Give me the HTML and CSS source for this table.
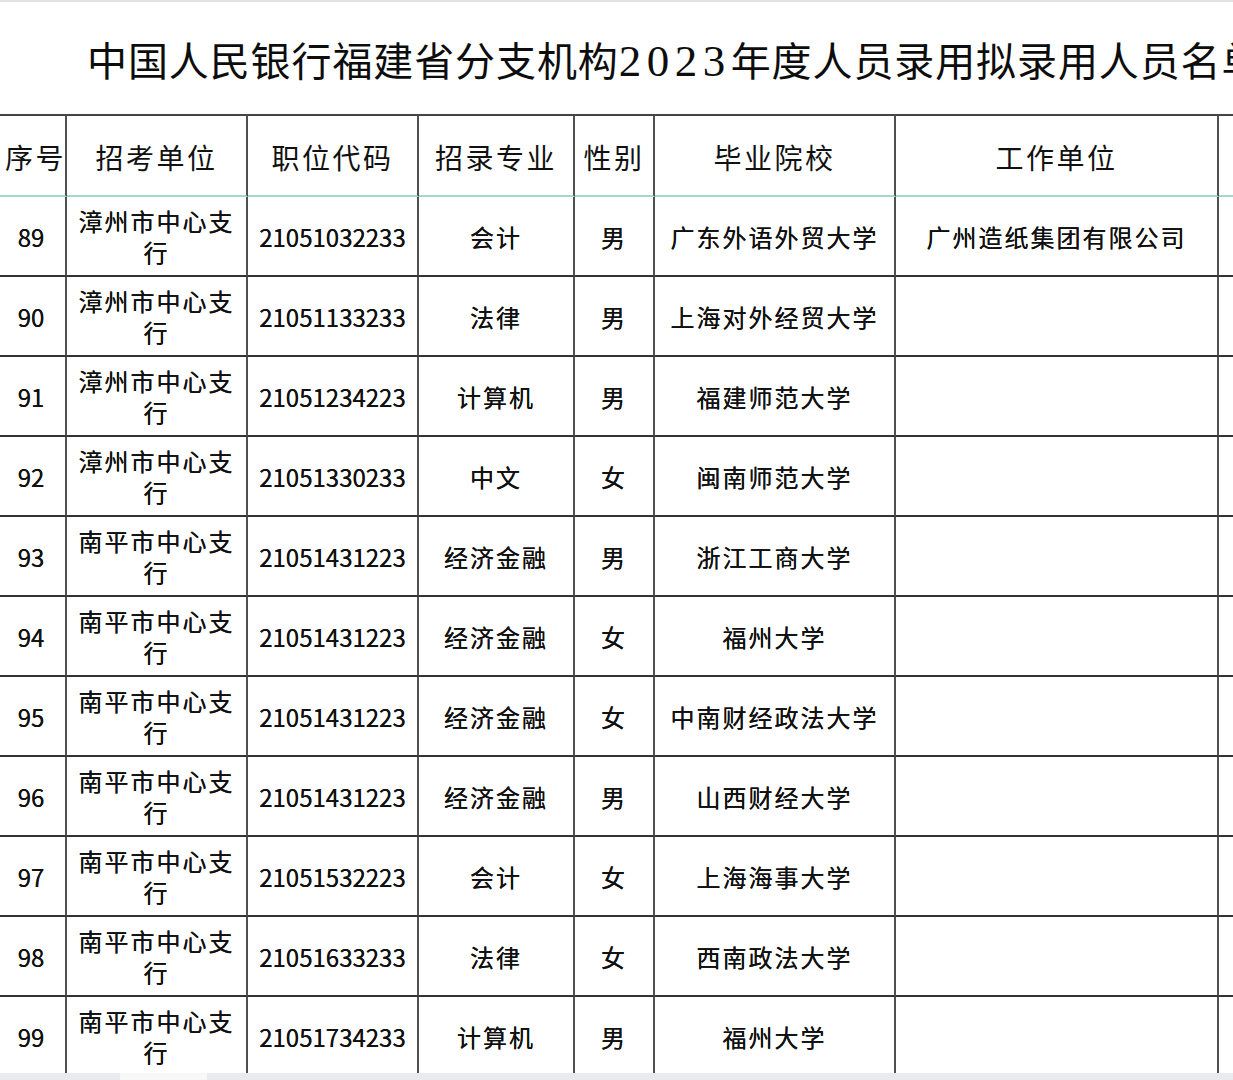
FILE: index.html
```html
<!DOCTYPE html>
<html lang="zh-CN">
<head>
<meta charset="utf-8">
<title>拟录用人员名单</title>
<link rel="stylesheet" href="styles.css">
</head>
<body>
<div class="sheet">
  <div class="title-row">
    <h1 class="title">中国人民银行福建省分支机构<span class="num">2023</span>年度人员录用拟录用人员名单</h1>
  </div>
  <table class="grid">
    <colgroup>
      <col class="c-no"><col class="c-unit"><col class="c-code"><col class="c-major"><col class="c-sex"><col class="c-school"><col class="c-work"><col class="c-more">
    </colgroup>
    <thead>
      <tr>
        <th>序号</th><th>招考单位</th><th>职位代码</th><th>招录专业</th><th>性别</th><th>毕业院校</th><th>工作单位</th><th></th>
      </tr>
    </thead>
    <tbody>
      <tr><td class="n">89</td><td>漳州市中心支行</td><td class="n">21051032233</td><td>会计</td><td>男</td><td>广东外语外贸大学</td><td>广州造纸集团有限公司</td><td></td></tr>
      <tr><td class="n">90</td><td>漳州市中心支行</td><td class="n">21051133233</td><td>法律</td><td>男</td><td>上海对外经贸大学</td><td></td><td></td></tr>
      <tr><td class="n">91</td><td>漳州市中心支行</td><td class="n">21051234223</td><td>计算机</td><td>男</td><td>福建师范大学</td><td></td><td></td></tr>
      <tr><td class="n">92</td><td>漳州市中心支行</td><td class="n">21051330233</td><td>中文</td><td>女</td><td>闽南师范大学</td><td></td><td></td></tr>
      <tr><td class="n">93</td><td>南平市中心支行</td><td class="n">21051431223</td><td>经济金融</td><td>男</td><td>浙江工商大学</td><td></td><td></td></tr>
      <tr><td class="n">94</td><td>南平市中心支行</td><td class="n">21051431223</td><td>经济金融</td><td>女</td><td>福州大学</td><td></td><td></td></tr>
      <tr><td class="n">95</td><td>南平市中心支行</td><td class="n">21051431223</td><td>经济金融</td><td>女</td><td>中南财经政法大学</td><td></td><td></td></tr>
      <tr><td class="n">96</td><td>南平市中心支行</td><td class="n">21051431223</td><td>经济金融</td><td>男</td><td>山西财经大学</td><td></td><td></td></tr>
      <tr><td class="n">97</td><td>南平市中心支行</td><td class="n">21051532223</td><td>会计</td><td>女</td><td>上海海事大学</td><td></td><td></td></tr>
      <tr><td class="n">98</td><td>南平市中心支行</td><td class="n">21051633233</td><td>法律</td><td>女</td><td>西南政法大学</td><td></td><td></td></tr>
      <tr><td class="n">99</td><td>南平市中心支行</td><td class="n">21051734233</td><td>计算机</td><td>男</td><td>福州大学</td><td></td><td></td></tr>
    </tbody>
  </table>
  <div class="tabbar"><span class="tab-a"></span><span class="tab-b"></span><span class="tab-c"></span></div>
</div>
</body>
</html>
```

FILE: styles.css
```css
html, body {
  margin: 0;
  padding: 0;
  background: #ffffff;
  overflow: hidden;
}

.sheet {
  position: relative;
  width: 1233px;
  height: 1080px;
  overflow: hidden;
  border-top: 2px solid #e2e2e2;
  box-sizing: border-box;
  font-family: "Noto Sans CJK SC", "Noto Sans", sans-serif;
  color: #111111;
}

.title-row {
  height: 112px;
  display: flex;
  align-items: center;
  padding-left: 87px;
  white-space: nowrap;
}

.title {
  margin: 0;
  font-family: "Liberation Serif", "DejaVu Serif", "Noto Sans CJK SC", serif;
  font-weight: 400;
  font-size: 40px;
  letter-spacing: 0.9px;
  line-height: 44px;
  color: #0d0d0d;
  padding-top: 8px;
}

.title .num {
  font-family: "Liberation Serif", "DejaVu Serif", serif;
  font-size: 45px;
  letter-spacing: 5.5px;
}

.grid {
  margin-left: -3px;
  border-collapse: separate;
  border-spacing: 0;
  table-layout: fixed;
  width: 1422px;
}

.c-no { width: 70px; }
.c-unit { width: 181px; }
.c-code { width: 171px; }
.c-major { width: 156px; }
.c-sex { width: 80px; }
.c-school { width: 241px; }
.c-work { width: 323px; }
.c-more { width: 200px; }

.grid th,
.grid td {
  padding: 0 8px;
  border-right: 2px solid #505050;
  border-bottom: 2px solid #333333;
  text-align: center;
  vertical-align: middle;
  overflow: hidden;
}

.grid th {
  height: 83px;
  box-sizing: border-box;
  border-top: 2px solid #444444;
  border-bottom: 2px solid #a3d9c8;
  font-size: 28px;
  font-weight: 400;
  letter-spacing: 2.5px;
  line-height: 34px;
  white-space: nowrap;
  padding-top: 2px;
  padding-bottom: 0;
}

.grid tbody tr {
  height: 80px;
}

.grid td {
  font-size: 24px;
  letter-spacing: 2px;
  line-height: 31px;
  text-shadow: 0 0 0.3px #111;
}

.grid td.n {
  letter-spacing: 0;
  padding-top: 0;
}

.tabbar {
  position: absolute;
  left: 0;
  right: 0;
  bottom: 0;
  height: 7px;
  display: flex;
}

.tab-a { width: 120px; background: #e9ebef; }
.tab-b { width: 87px; background: #f8f8f9; }
.tab-c { flex: 1; background: #e9ebef; }
```
